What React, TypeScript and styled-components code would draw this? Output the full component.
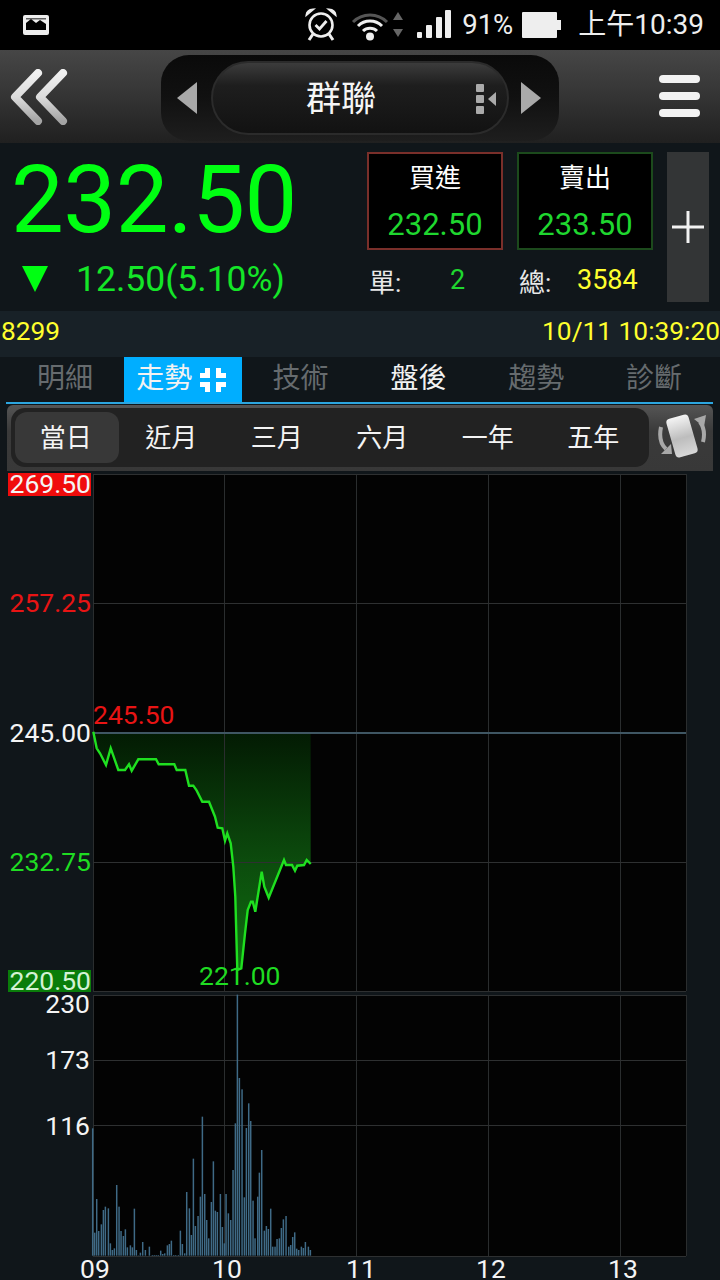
import { FC } from "react";
import styled, { createGlobalStyle } from "styled-components";

const GlobalStyle = createGlobalStyle`
  html, body {
    margin: 0;
    padding: 0;
    background: #10161a;
  }
  * {
    box-sizing: border-box;
  }
`;

const Page = styled.div`
  width: 720px;
  height: 1280px;
  overflow: hidden;
  display: flex;
  flex-direction: column;
  background: #10161a;
  font-family: Roboto, "Noto Sans CJK TC", sans-serif;
  color: #fff;
`;

/* status bar */
const StatusBar = styled.div`
  height: 50px;
  background: #000;
  display: flex;
  align-items: center;
  padding: 0 16px 0 23px;
`;

const StatusIcons = styled.div`
  margin-left: auto;
  display: flex;
  align-items: center;
`;

const StatusText = styled.span<{ $size: number; $left: number }>`
  font-size: ${({ $size }) => $size}px;
  margin-left: ${({ $left }) => $left}px;
  color: #eee;
  line-height: 50px;
  white-space: nowrap;
`;

const StatusGlyph = styled.svg<{ $left?: number }>`
  display: block;
  margin-left: ${({ $left }) => $left ?? 0}px;
`;

/* toolbar */
const Toolbar = styled.div`
  height: 93px;
  background: linear-gradient(#464646, #383838 40%, #202020);
  display: flex;
  align-items: center;
  padding: 0 20px 0 10px;
`;

const Selector = styled.div`
  width: 398px;
  height: 86px;
  margin: 2px 0 0 91px;
  border-radius: 28px;
  background: linear-gradient(#0a0a0a, #111 50%, #1e1e1e);
  display: flex;
  align-items: center;
  padding-left: 16px;
`;

const NamePill = styled.div`
  position: relative;
  width: 298px;
  height: 74px;
  margin: 0 12px 0 14px;
  padding: 0 38px 4px 0;
  border-radius: 37px;
  border: 2px solid #2b2b2b;
  background: linear-gradient(#3c3c3c, #1e1e1e 32%, #121212);
  display: flex;
  align-items: center;
  justify-content: center;
  font-size: 35px;
  color: #f5f5f5;
`;

const PillMark = styled.svg`
  position: absolute;
  right: 9px;
  top: 19px;
`;

const MenuGlyph = styled.svg`
  margin-left: auto;
`;

/* quote */
const Quote = styled.div`
  height: 168px;
  display: flex;
  padding: 9px 11px 0 0;
`;

const PriceColumn = styled.div`
  width: 367px;
  padding-left: 11px;
`;

const BigPrice = styled.div`
  font-size: 94px;
  line-height: 96px;
  height: 100px;
  color: #00ff12;
  letter-spacing: -0.5px;
`;

const ChangeRow = styled.div`
  display: flex;
  align-items: center;
  font-size: 35.5px;
  line-height: 40px;
  color: #14e628;
  padding-left: 11px;
  margin-top: 7px;
`;

const DownArrow = styled.svg`
  margin-right: 28px;
`;

const OrderColumn = styled.div`
  width: 286px;
  display: grid;
  grid-template-columns: 136px 136px;
  column-gap: 14px;
  align-content: start;
`;

const OrderBox = styled.div<{ $edge: string }>`
  height: 98px;
  background: #000;
  border: 2px solid ${({ $edge }) => $edge};
  display: flex;
  flex-direction: column;
  align-items: center;
  padding-top: 5px;
`;

const OrderLabel = styled.div`
  font-size: 26px;
  line-height: 38px;
  color: #fff;
`;

const OrderPrice = styled.div`
  font-size: 31px;
  line-height: 36px;
  margin-top: 10px;
  color: #1fd72f;
`;

const TotalCell = styled.div`
  display: flex;
  align-items: center;
  height: 60px;
  font-size: 26px;
`;

const TotalLabel = styled.span`
  color: #e8e8e8;
  width: 60px;
  padding-left: 2px;
`;

const TotalValue = styled.span<{ $color: string; $pad: number }>`
  color: ${({ $color }) => $color};
  font-size: 27px;
  padding-left: ${({ $pad }) => $pad}px;
`;

const PlusButton = styled.div`
  width: 42px;
  height: 150px;
  margin-left: 14px;
  background: #333536;
  display: flex;
  align-items: center;
  justify-content: center;
`;

/* info bar */
const InfoBar = styled.div`
  height: 46px;
  background: #182127;
  display: flex;
  align-items: center;
  justify-content: space-between;
  font-size: 26.3px;
  color: #ffff2e;
  padding: 0 0 6px 1px;
`;

/* tabs */
const Tabs = styled.div`
  height: 47px;
  margin: 0 7px 0 6px;
  display: grid;
  grid-template-columns: repeat(6, 1fr);
  border-bottom: 2px solid #2ca6e0;
`;

const Tab = styled.div<{ $active?: boolean; $lit?: boolean }>`
  display: flex;
  align-items: center;
  justify-content: center;
  gap: 8px;
  padding: ${({ $active }) => ($active ? "0 3px 0 0" : "0 0 1px")};
  font-size: 28px;
  line-height: 40px;
  background: ${({ $active }) => ($active ? "#00aeff" : "transparent")};
  color: ${({ $active, $lit }) => ($active || $lit ? "#f2f2f2" : "#666b6e")};
`;

const ActiveTabText = styled.span`
  margin-bottom: 1px;
`;

/* range bar */
const RangeBar = styled.div`
  height: 66px;
  margin: 1px 7px 0 7px;
  border-radius: 6px 6px 0 0;
  background: linear-gradient(#555, #3a3a3a 40%, #383838);
  display: flex;
  align-items: center;
  padding: 0 5px 2px 4px;
  justify-content: space-between;
`;

const RangeTrack = styled.div`
  width: 638px;
  height: 59px;
  border-radius: 14px;
  background: #222;
  display: grid;
  grid-template-columns: repeat(6, 105.5px);
  align-items: center;
  padding-left: 4px;
`;

const RangeItem = styled.div<{ $active?: boolean }>`
  height: 51px;
  border-radius: 12px;
  display: flex;
  align-items: center;
  justify-content: center;
  margin-right: ${({ $active }) => ($active ? 2 : 0)}px;
  padding: 0 ${({ $active }) => ($active ? 2 : 4)}px 3px 0;
  font-size: 26px;
  color: #f4f4f4;
  background: ${({ $active }) => ($active ? "#383838" : "transparent")};
`;

const ChartSvg = styled.svg`
  display: block;
  margin-top: 3px;
  flex: none;
  overflow: visible;
  text {
    font-family: Roboto, sans-serif;
    font-size: 26.5px;
  }
`;

const tabs = ["明細", "走勢", "技術", "盤後", "趨勢", "診斷"];
const ranges = ["當日", "近月", "三月", "六月", "一年", "五年"];

// line and bar samples, read off the reference at 3x from (80, 720) and (80, 990)
const linePoints = [
  [40, 35], [50, 85], [60, 100], [78, 135], [92, 85], [115, 150], [135, 150], [147, 133],
  [155, 152], [175, 118], [228, 118], [236, 133], [283, 133], [290, 150], [316, 150],
  [327, 197], [340, 197], [350, 212], [367, 245], [387, 245], [405, 290], [413, 323],
  [427, 325], [435, 362], [442, 340], [452, 370], [460, 440], [466, 530], [472, 750],
  [484, 745], [495, 640], [503, 570], [513, 545], [518, 545], [526, 575], [545, 455],
  [553, 500], [566, 533], [612, 420], [618, 435], [636, 435], [645, 452], [652, 437],
  [672, 435], [680, 420], [692, 432],
];

const bars = [
  [38, 415], [44, 728], [50, 627], [56, 723], [64, 703], [70, 660], [76, 650], [85, 655],
  [91, 760], [97, 780], [103, 775], [110, 585], [117, 650], [123, 723], [130, 738], [136, 718],
  [142, 772], [151, 766], [157, 772], [163, 656], [169, 780], [175, 796], [181, 788], [188, 756],
  [196, 780], [208, 770], [217, 795], [223, 795], [229, 795], [235, 795], [242, 782], [248, 792],
  [254, 790], [262, 766], [268, 762], [274, 752], [281, 795], [287, 795], [295, 795], [301, 722],
  [307, 762], [314, 790], [320, 606], [328, 655], [334, 735], [340, 506], [346, 708], [354, 678],
  [361, 620], [367, 380], [374, 612], [380, 690], [386, 745], [394, 636], [400, 514], [406, 662],
  [412, 666], [421, 612], [427, 711], [433, 760], [438, 612], [445, 670], [452, 690], [459, 540],
  [466, 400], [472, 14], [478, 264], [486, 298], [493, 622], [499, 414], [506, 340], [512, 393],
  [519, 632], [525, 745], [533, 620], [538, 548], [545, 480], [553, 722], [559, 708], [565, 717],
  [572, 656], [578, 770], [585, 770], [591, 747], [598, 745], [604, 714], [610, 688], [618, 678],
  [626, 770], [632, 765], [638, 741], [644, 727], [650, 776], [656, 780], [664, 770], [670, 774],
  [676, 756], [685, 770], [691, 780],
];

const CHART_TOP = 474;
const px = (v: number) => 80 + v / 3;
const py = (v: number) => 720 + v / 3 - CHART_TOP;
const vy = (v: number) => 990 + v / 3 - CHART_TOP;
const y = (v: number) => v - CHART_TOP;

const linePath = linePoints.map(([a, b]) => `${px(a).toFixed(1)},${py(b).toFixed(1)}`).join(" ");
const fillPath = `${px(40)},${y(733)} ${linePath} ${px(692)},${y(733)}`;

const verticals = [93, 224, 356, 488, 620, 686];

const Chart: FC = () => (
  <ChartSvg width={720} height={806} viewBox="0 0 720 806">
    <defs>
      <linearGradient id="area" x1="0" y1="0" x2="0" y2="1">
        <stop offset="0" stopColor="#031a03" />
        <stop offset="0.55" stopColor="#0c4c0d" />
        <stop offset="1" stopColor="#0f7010" />
      </linearGradient>
    </defs>
    <rect x={93} y={0} width={593} height={y(991)} fill="#030303" />
    <rect x={93} y={y(995)} width={593} height={261} fill="#030303" />
    <polygon points={fillPath} fill="url(#area)" />
    {verticals.map((v) => (
      <g key={v} stroke="#2a2d2e" strokeWidth={1}>
        <line x1={v + 0.5} x2={v + 0.5} y1={0} y2={y(991)} />
        <line x1={v + 0.5} x2={v + 0.5} y1={y(995)} y2={y(1256)} />
      </g>
    ))}
    {[474, 603, 862, 991, 995, 1060, 1125, 1256].map((h) => (
      <line key={h} x1={93} x2={686} y1={y(h) + 0.5} y2={y(h) + 0.5} stroke="#2e3031" />
    ))}
    <line x1={93} x2={686} y1={y(733)} y2={y(733)} stroke="#3f5663" strokeWidth={2} />
    <polyline points={linePath} fill="none" stroke="#1fe020" strokeWidth={2.4} />
    <g fill="#3f6a86">
      {bars.map(([a, b]) => (
        <rect key={a} x={px(a) - 0.7} y={vy(b)} width={1.5} height={vy(797) - vy(b)} />
      ))}
    </g>

    <rect x={8} y={-1} width={83} height={23} fill="#f00c0c" />
    <rect x={8} y={y(970)} width={83} height={22} fill="#0a7d0a" />
    <g textAnchor="end">
      <text x={91} y={y(493)} fill="#f4f4f4">269.50</text>
      <text x={91} y={y(612)} fill="#e81414">257.25</text>
      <text x={91} y={y(742)} fill="#f4f4f4">245.00</text>
      <text x={91} y={y(871)} fill="#1fdc22">232.75</text>
      <text x={91} y={y(990)} fill="#d4f2d4">220.50</text>
      <text x={90} y={y(1013)} fill="#f4f4f4">230</text>
      <text x={90} y={y(1069)} fill="#f4f4f4">173</text>
      <text x={90} y={y(1135)} fill="#f4f4f4">116</text>
    </g>
    <text x={93} y={y(724)} fill="#e81414">245.50</text>
    <text x={199} y={y(985)} fill="#1fdc22">221.00</text>
    {[["09", 80], ["10", 212], ["11", 346], ["12", 476], ["13", 608]].map(([t, x]) => (
      <text key={t} x={x} y={y(1278)} fill="#f4f4f4">{t}</text>
    ))}
  </ChartSvg>
);

const App: FC = () => (
  <Page>
    <GlobalStyle />
    <StatusBar>
      <svg width={26} height={20} viewBox="0 0 26 20">
        <rect x={0} y={0} width={26} height={20} rx={2} fill="#eee" />
        <path d="M3 15 L3 8 L8 4 L13 8 L17 5 L23 9 L23 15 Z" fill="#000" />
        <rect x={3} y={3} width={20} height={1.5} fill="#000" opacity={0.6} />
      </svg>
      <StatusIcons>
        <svg width={32} height={34} viewBox="0 0 32 34">
          <circle cx={16} cy={17} r={11.5} fill="none" stroke="#eee" strokeWidth={2.6} />
          <path d="M10.5 17 L14.5 21 L21.5 13" fill="none" stroke="#eee" strokeWidth={2.8} />
          <path d="M1.5 7 Q2 2 8 1.5 Z M30.5 7 Q30 2 24 1.5 Z" fill="#eee" stroke="#eee" strokeWidth={2} />
          <path d="M8 26 L4 32 M24 26 L28 32" stroke="#eee" strokeWidth={3} />
        </svg>
        <StatusGlyph $left={14} width={38} height={32} viewBox="0 0 38 32">
          <path d="M2 13 A24 24 0 0 1 36 13" fill="none" stroke="#555" strokeWidth={3} />
          <path d="M7 17 A17 17 0 0 1 31 17" fill="none" stroke="#eee" strokeWidth={3} />
          <path d="M12 22 A10 10 0 0 1 26 22" fill="none" stroke="#eee" strokeWidth={3} />
          <circle cx={19} cy={27.5} r={4} fill="#eee" />
        </StatusGlyph>
        <StatusGlyph $left={4} width={10} height={26} viewBox="0 0 10 26">
          <path d="M5 0 L10 8 L0 8 Z" fill="#666" />
          <path d="M0 17 L10 17 L5 25 Z" fill="#666" />
        </StatusGlyph>
        <StatusGlyph $left={14} width={34} height={30} viewBox="0 0 34 30">
          <rect x={0} y={22} width={5} height={6} rx={1} fill="#eee" />
          <rect x={9} y={15} width={6} height={13} rx={1} fill="#eee" />
          <rect x={19} y={7} width={6} height={21} rx={1} fill="#eee" />
          <rect x={28} y={0} width={6} height={28} rx={1} fill="#eee" />
        </StatusGlyph>
        <StatusText $size={27.5} $left={11}>91%</StatusText>
        <StatusGlyph $left={9} width={39} height={26} viewBox="0 0 39 26">
          <rect x={0} y={0} width={35} height={26} rx={1} fill="#eee" />
          <rect x={35} y={8} width={4} height={10} fill="#eee" />
        </StatusGlyph>
        <StatusText $size={28} $left={17}>上午10:39</StatusText>
      </StatusIcons>
    </StatusBar>

    <Toolbar>
      <svg width={60} height={56} viewBox="0 0 60 56">
        <defs>
          <linearGradient id="chev" x1="0" y1="0" x2="0" y2="1">
            <stop offset="0" stopColor="#f0f0f0" />
            <stop offset="0.5" stopColor="#dcdcdc" />
            <stop offset="1" stopColor="#a4a4a4" />
          </linearGradient>
        </defs>
        <path d="M28 4 L5 28 L28 52" fill="none" stroke="url(#chev)" strokeWidth={8} strokeLinecap="round" strokeLinejoin="round" />
        <path d="M53 4 L30 28 L53 52" fill="none" stroke="url(#chev)" strokeWidth={8} strokeLinecap="round" strokeLinejoin="round" />
      </svg>
      <Selector>
        <svg width={20} height={32} viewBox="0 0 20 32">
          <path d="M20 0 L0 16 L20 32 Z" fill="#a9a9a9" />
        </svg>
        <NamePill>
          群聯
          <PillMark width={22} height={34} viewBox="0 0 22 34">
            <rect x={0} y={2} width={8} height={8} rx={1} fill="#aaa" />
            <rect x={0} y={13} width={8} height={8} rx={1} fill="#aaa" />
            <rect x={0} y={24} width={8} height={8} rx={1} fill="#aaa" />
            <path d="M20 10 L12 17 L20 24 Z" fill="#aaa" />
          </PillMark>
        </NamePill>
        <svg width={20} height={32} viewBox="0 0 20 32">
          <path d="M0 0 L20 16 L0 32 Z" fill="#a9a9a9" />
        </svg>
      </Selector>
      <MenuGlyph width={41} height={44} viewBox="0 0 41 44">
        <rect x={0} y={0} width={41} height={8} rx={4} fill="#f2f2f2" />
        <rect x={0} y={17} width={41} height={8} rx={4} fill="#f2f2f2" />
        <rect x={0} y={34} width={41} height={8} rx={4} fill="#f2f2f2" />
      </MenuGlyph>
    </Toolbar>

    <Quote>
      <PriceColumn>
        <BigPrice>232.50</BigPrice>
        <ChangeRow>
          <DownArrow width={26} height={26} viewBox="0 0 26 26">
            <path d="M0 0 L26 0 L13 26 Z" fill="#00ff12" />
          </DownArrow>
          12.50(5.10%)
        </ChangeRow>
      </PriceColumn>
      <OrderColumn>
        <OrderBox $edge="#7a2f2a">
          <OrderLabel>買進</OrderLabel>
          <OrderPrice>232.50</OrderPrice>
        </OrderBox>
        <OrderBox $edge="#1c4a1c">
          <OrderLabel>賣出</OrderLabel>
          <OrderPrice>233.50</OrderPrice>
        </OrderBox>
        <TotalCell>
          <TotalLabel>單:</TotalLabel>
          <TotalValue $color="#1fd72f" $pad={23}>2</TotalValue>
        </TotalCell>
        <TotalCell>
          <TotalLabel>總:</TotalLabel>
          <TotalValue $color="#ffff2e" $pad={0}>3584</TotalValue>
        </TotalCell>
      </OrderColumn>
      <PlusButton>
        <svg width={32} height={32} viewBox="0 0 32 32">
          <path d="M0 16 L32 16 M16 0 L16 32" stroke="#f2f2f2" strokeWidth={3} />
        </svg>
      </PlusButton>
    </Quote>

    <InfoBar>
      <span>8299</span>
      <span>10/11 10:39:20</span>
    </InfoBar>

    <Tabs>
      {tabs.map((t) =>
        t === "走勢" ? (
          <Tab key={t} $active>
            <ActiveTabText>{t}</ActiveTabText>
            <svg width={26} height={24} viewBox="0 0 26 24">
              <path
                d="M7.5 0 V7.5 H0 M18.5 0 V7.5 H26 M7.5 24 V16.5 H0 M18.5 24 V16.5 H26"
                fill="none"
                stroke="#fff"
                strokeWidth={5}
              />
            </svg>
          </Tab>
        ) : (
          <Tab key={t} $lit={t === "盤後"}>{t}</Tab>
        )
      )}
    </Tabs>

    <RangeBar>
      <RangeTrack>
        {ranges.map((r) => (
          <RangeItem key={r} $active={r === "當日"}>{r}</RangeItem>
        ))}
      </RangeTrack>
      <svg width={52} height={50} viewBox="0 0 52 50">
        <defs>
          <linearGradient id="card" x1="0" y1="0" x2="0" y2="1">
            <stop offset="0" stopColor="#f4f4f4" />
            <stop offset="0.55" stopColor="#bdbdbd" />
            <stop offset="1" stopColor="#d8d8d8" />
          </linearGradient>
        </defs>
        <path d="M47 30 Q50 18 44 10" fill="none" stroke="#a8a8a8" strokeWidth={4} />
        <path d="M38 7 L50 3 L48 15 Z" fill="#a8a8a8" />
        <path d="M5 15 Q2 30 10 37" fill="none" stroke="#a8a8a8" strokeWidth={4} />
        <path d="M5 42 L16 42 L15 32 Z" fill="#a8a8a8" />
        <rect x={14.5} y={4} width={23} height={40} rx={4} fill="url(#card)" transform="rotate(-16 26 24)" />
      </svg>
    </RangeBar>

    <Chart />
  </Page>
);

export default App;
